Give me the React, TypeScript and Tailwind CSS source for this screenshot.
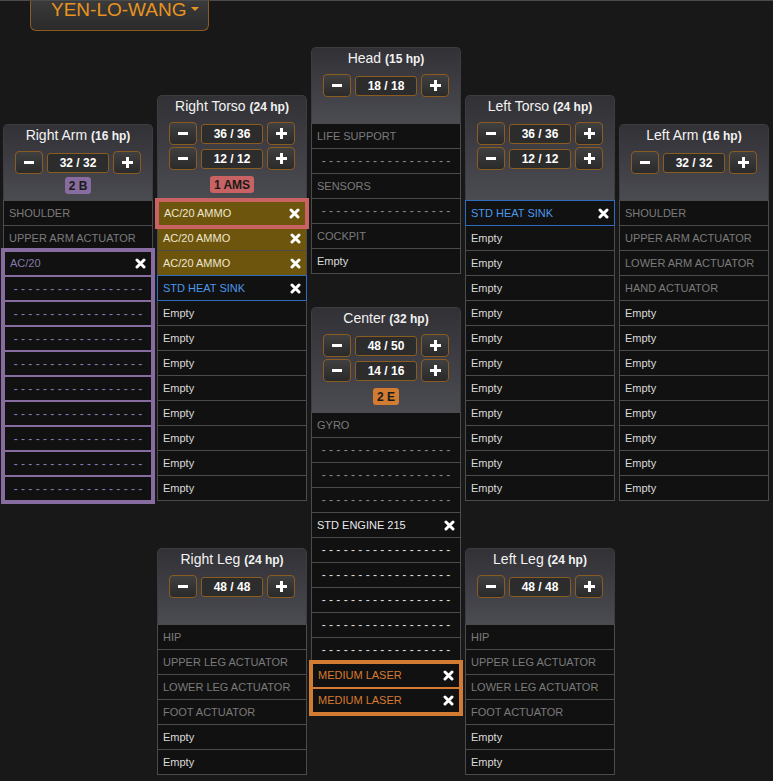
import React from "react";

type Tone = "fixed" | "empty" | "ammo" | "heat" | "engine" | "ac20" | "laser";
type GroupColor = "purple" | "red" | "orange";
type DashColor = "gray" | "white" | "purple";

type Item =
  | { kind: "slot"; label: string; tone: Tone; x?: boolean }
  | { kind: "dash"; color: DashColor }
  | { kind: "group"; color: GroupColor; items: Item[] };

const DASHES = "- - - - - - - - - - - - - - - - - -";

const toneText: Record<Tone, string> = {
  fixed: "text-[#7b7b7b]",
  empty: "text-[#dadada]",
  ammo: "text-[#efe6cc]",
  heat: "text-[#4a98ea]",
  engine: "text-[#e8e8e8]",
  ac20: "text-[#8479ab]",
  laser: "text-[#d77a2f]",
};

const dashText: Record<DashColor, string> = {
  gray: "text-[#8a8a8a]",
  white: "text-[#dddddd]",
  purple: "text-[#8a7db6]",
};

const groupOuter: Record<GroupColor, string> = {
  purple: "border-[#866c9f] bg-[#866c9f]",
  red: "border-[#c96262] bg-[#c96262]",
  orange: "border-[#d27b33] bg-[#d27b33]",
};

const groupInner: Record<GroupColor, string> = {
  purple: "border border-[#866c9f]",
  red: "border border-[#c96262]",
  orange: "border border-[#d27b33]",
};

const badgeBg: Record<GroupColor, string> = {
  purple: "bg-[#866c9f]",
  red: "bg-[#c96262]",
  orange: "bg-[#d27b33]",
};

const s = (label: string, tone: Tone, x = false): Item => ({ kind: "slot", label, tone, x });
const d = (color: DashColor): Item => ({ kind: "dash", color });
const empties = (n: number): Item[] => Array.from({ length: n }, () => s("Empty", "empty"));
const dashes = (n: number, color: DashColor): Item[] => Array.from({ length: n }, () => d(color));

function CloseIcon() {
  return (
    <svg width="11" height="11" viewBox="0 0 11 11" className="shrink-0">
      <path d="M2 2L9 9M9 2L2 9" stroke="#ffffff" strokeWidth="3" strokeLinecap="round" />
    </svg>
  );
}

function Row({ item, group }: { item: Item; group?: GroupColor }) {
  if (item.kind === "group") {
    return (
      <div className={`relative z-10 -mx-[2px] -my-[3px] border-[3px] ${groupOuter[item.color]}`}>
        {item.items.map((it, i) => (
          <Row key={i} item={it} group={item.color} />
        ))}
      </div>
    );
  }

  const heat = item.kind === "slot" && item.tone === "heat";
  const border = group
    ? `${groupInner[group]} h-[25px]`
    : heat
      ? "relative border border-[#2f6cbd] -mt-px h-[26px]"
      : "border-x border-b border-[#4b4b4b] h-[25px]";

  if (item.kind === "dash") {
    return (
      <div
        className={`${border} bg-[#111111] flex items-center justify-center text-[12px] leading-none ${dashText[item.color]}`}
      >
        {DASHES}
      </div>
    );
  }

  const bg = item.tone === "ammo" ? "bg-[#6d550e]" : "bg-[#111111]";
  return (
    <div className={`${border} ${bg} flex items-center justify-between px-[5px] text-[11px] leading-none`}>
      <span className={toneText[item.tone]}>{item.label}</span>
      {item.x && <CloseIcon />}
    </div>
  );
}

function Stepper({ value }: { value: string }) {
  return (
    <div className="flex items-center gap-[4px]">
      <button className="w-[28px] h-[23px] rounded-[4px] border border-[#8a5c20] bg-gradient-to-b from-[#404040] to-[#2a2a2a] flex items-center justify-center">
        <svg width="10" height="3" viewBox="0 0 10 3">
          <rect width="10" height="3" fill="#ffffff" />
        </svg>
      </button>
      <div className="w-[62px] h-[20px] rounded-[3px] border border-[#8a5c20] bg-[#2c2c2c] flex items-center justify-center text-[12px] font-bold text-white">
        {value}
      </div>
      <button className="w-[28px] h-[23px] rounded-[4px] border border-[#8a5c20] bg-gradient-to-b from-[#404040] to-[#2a2a2a] flex items-center justify-center">
        <svg width="11" height="11" viewBox="0 0 11 11">
          <rect x="0" y="4" width="11" height="3" fill="#ffffff" />
          <rect x="4" y="0" width="3" height="11" fill="#ffffff" />
        </svg>
      </button>
    </div>
  );
}

interface PanelProps {
  title: string;
  hp: number;
  values: string[];
  badge?: { text: string; color: GroupColor };
  items: Item[];
  className?: string;
}

function Panel({ title, hp, values, badge, items, className = "" }: PanelProps) {
  const two = values.length > 1;
  return (
    <div className={`w-[150px] flex flex-col ${className}`}>
      <div
        className={`${two ? "h-[105px]" : "h-[76px]"} rounded-t-[5px] border border-b-0 border-[#3c3c41] bg-gradient-to-b from-[#313136] to-[#4b4b52] flex flex-col items-center pt-[2px]`}
      >
        <div className="h-[16px] leading-[16px] text-[14px] text-[#f2f2f2] whitespace-nowrap">
          {title} <span className="text-[12px] font-bold">({hp} hp)</span>
        </div>
        <div className="mt-[8px] flex flex-col gap-[2px]">
          {values.map((v, i) => (
            <Stepper key={i} value={v} />
          ))}
        </div>
        {badge && (
          <div
            className={`${two ? "mt-[6px]" : "mt-[3px]"} h-[17px] px-[4px] rounded-[3px] ${badgeBg[badge.color]} flex items-center text-[12px] font-bold text-[#1a1a1a] leading-none`}
          >
            {badge.text}
          </div>
        )}
      </div>
      <div className="flex flex-col border-t border-[#4b4b4b]">
        {items.map((it, i) => (
          <Row key={i} item={it} />
        ))}
      </div>
    </div>
  );
}

const legItems: Item[] = [
  s("HIP", "fixed"),
  s("UPPER LEG ACTUATOR", "fixed"),
  s("LOWER LEG ACTUATOR", "fixed"),
  s("FOOT ACTUATOR", "fixed"),
  ...empties(2),
];

export default function App() {
  return (
    <div className="min-h-screen w-full bg-[#181818] border-t border-[#4a4a4a] font-['Liberation_Sans',Arial,sans-serif]">
      <div className="h-[30px] flex">
        <button className="ml-[30px] w-[179px] h-[30px] rounded-b-[6px] border border-t-0 border-[#8a5c20] bg-gradient-to-b from-[#3a3a3a] to-[#2b2b2b] flex items-start pl-[20px]">
          <span className="leading-[18px] text-[19px] text-[#e8941f]">YEN-LO-WANG</span>
          <span className="ml-[5px] mt-[6px] w-0 h-0 border-x-[4px] border-x-transparent border-t-[4px] border-t-[#e8941f]" />
        </button>
      </div>

      <div className="flex items-start gap-[4px] pl-[3px]">
        <Panel
          className="mt-[93px]"
          title="Right Arm"
          hp={16}
          values={["32 / 32"]}
          badge={{ text: "2 B", color: "purple" }}
          items={[
            s("SHOULDER", "fixed"),
            s("UPPER ARM ACTUATOR", "fixed"),
            { kind: "group", color: "purple", items: [s("AC/20", "ac20", true), ...dashes(9, "purple")] },
          ]}
        />

        <div className="flex flex-col mt-[64px]">
          <Panel
            title="Right Torso"
            hp={24}
            values={["36 / 36", "12 / 12"]}
            badge={{ text: "1 AMS", color: "red" }}
            items={[
              { kind: "group", color: "red", items: [s("AC/20 AMMO", "ammo", true)] },
              s("AC/20 AMMO", "ammo", true),
              s("AC/20 AMMO", "ammo", true),
              s("STD HEAT SINK", "heat", true),
              ...empties(8),
            ]}
          />
          <Panel className="mt-[47px]" title="Right Leg" hp={24} values={["48 / 48"]} items={legItems} />
        </div>

        <div className="flex flex-col mt-[16px]">
          <Panel
            title="Head"
            hp={15}
            values={["18 / 18"]}
            items={[
              s("LIFE SUPPORT", "fixed"),
              d("gray"),
              s("SENSORS", "fixed"),
              d("gray"),
              s("COCKPIT", "fixed"),
              s("Empty", "empty"),
            ]}
          />
          <Panel
            className="mt-[33px]"
            title="Center"
            hp={32}
            values={["48 / 50", "14 / 16"]}
            badge={{ text: "2 E", color: "orange" }}
            items={[
              s("GYRO", "fixed"),
              ...dashes(3, "gray"),
              s("STD ENGINE 215", "engine", true),
              ...dashes(5, "white"),
              {
                kind: "group",
                color: "orange",
                items: [s("MEDIUM LASER", "laser", true), s("MEDIUM LASER", "laser", true)],
              },
            ]}
          />
        </div>

        <div className="flex flex-col mt-[64px]">
          <Panel
            title="Left Torso"
            hp={24}
            values={["36 / 36", "12 / 12"]}
            items={[s("STD HEAT SINK", "heat", true), ...empties(11)]}
          />
          <Panel className="mt-[47px]" title="Left Leg" hp={24} values={["48 / 48"]} items={legItems} />
        </div>

        <Panel
          className="mt-[93px]"
          title="Left Arm"
          hp={16}
          values={["32 / 32"]}
          items={[
            s("SHOULDER", "fixed"),
            s("UPPER ARM ACTUATOR", "fixed"),
            s("LOWER ARM ACTUATOR", "fixed"),
            s("HAND ACTUATOR", "fixed"),
            ...empties(8),
          ]}
        />
      </div>
    </div>
  );
}
